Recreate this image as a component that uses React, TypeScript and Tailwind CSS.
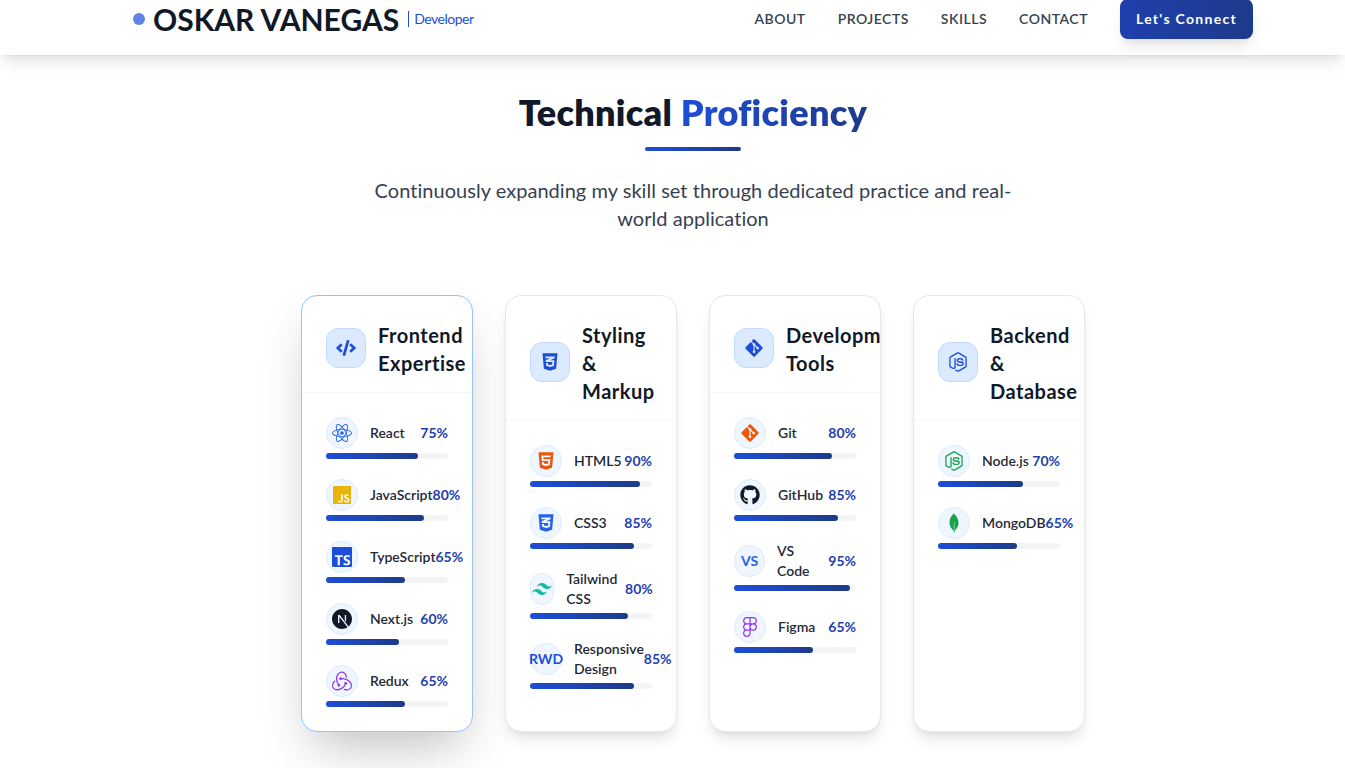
import type { ReactNode } from "react";
import { FaCode, FaCss3Alt, FaGitAlt, FaGithub, FaHtml5, FaNodeJs } from "react-icons/fa";
import {
  SiFigma,
  SiJavascript,
  SiMongodb,
  SiNextdotjs,
  SiReact,
  SiRedux,
  SiTailwindcss,
  SiTypescript,
} from "react-icons/si";

interface Skill {
  name: string;
  level: number;
  icon: ReactNode;
}

interface Group {
  title: string;
  icon: ReactNode;
  active?: boolean;
  skills: Skill[];
}

const groups: Group[] = [
  {
    title: "Frontend Expertise",
    icon: <FaCode className="text-xl text-[#1d4ed8]" />,
    active: true,
    skills: [
      { name: "React", level: 75, icon: <SiReact className="text-xl text-[#2563eb]" /> },
      { name: "JavaScript", level: 80, icon: <SiJavascript className="text-lg text-[#eab308]" /> },
      { name: "TypeScript", level: 65, icon: <SiTypescript className="text-xl text-[#1d4ed8]" /> },
      { name: "Next.js", level: 60, icon: <SiNextdotjs className="text-xl text-[#111827]" /> },
      { name: "Redux", level: 65, icon: <SiRedux className="text-xl text-[#9333ea]" /> },
    ],
  },
  {
    title: "Styling & Markup",
    icon: <FaCss3Alt className="text-xl text-[#1d4ed8]" />,
    skills: [
      { name: "HTML5", level: 90, icon: <FaHtml5 className="text-xl text-[#ea580c]" /> },
      { name: "CSS3", level: 85, icon: <FaCss3Alt className="text-xl text-[#2563eb]" /> },
      { name: "Tailwind CSS", level: 80, icon: <SiTailwindcss className="text-xl text-[#14b8a6]" /> },
      {
        name: "Responsive Design",
        level: 85,
        icon: <span className="text-sm font-bold text-[#1d4ed8]">RWD</span>,
      },
    ],
  },
  {
    title: "Development Tools",
    icon: <FaGitAlt className="text-xl text-[#1d4ed8]" />,
    skills: [
      { name: "Git", level: 80, icon: <FaGitAlt className="text-xl text-[#ea580c]" /> },
      { name: "GitHub", level: 85, icon: <FaGithub className="text-xl text-[#111827]" /> },
      {
        name: "VS Code",
        level: 95,
        icon: <span className="text-sm font-bold text-[#2563eb]">VS</span>,
      },
      { name: "Figma", level: 65, icon: <SiFigma className="text-xl text-[#9333ea]" /> },
    ],
  },
  {
    title: "Backend & Database",
    icon: <FaNodeJs className="text-xl text-[#1d4ed8]" />,
    skills: [
      { name: "Node.js", level: 70, icon: <FaNodeJs className="text-xl text-[#16a34a]" /> },
      { name: "MongoDB", level: 65, icon: <SiMongodb className="text-xl text-[#16a34a]" /> },
    ],
  },
];

const navLinks = ["About", "Projects", "Skills", "Contact"];

function SkillRow({ skill }: { skill: Skill }) {
  return (
    <div>
      <div className="mb-1 flex items-center justify-between">
        <div className="flex items-center gap-3">
          <div className="flex h-8 w-8 items-center justify-center rounded-full border border-[#dbeafe] bg-[#eff6ff]">
            {skill.icon}
          </div>
          <span className="text-sm font-semibold text-[#1f2937]">{skill.name}</span>
        </div>
        <span className="text-sm font-bold text-[#1e40af]">{skill.level}%</span>
      </div>
      <div className="h-1.5 w-full rounded-full bg-[#f3f4f6]">
        <div
          className="h-full rounded-full bg-gradient-to-r from-[#1d4ed8] to-[#1e3a8a]"
          style={{ width: `${skill.level}%` }}
        />
      </div>
    </div>
  );
}

function SkillCard({ group }: { group: Group }) {
  return (
    <div
      className={`overflow-hidden rounded-2xl border bg-white ${
        group.active ? "border-[#93c5fd] shadow-2xl" : "border-[#e5e7eb] shadow-lg"
      }`}
    >
      <div className="flex items-center gap-3 border-b border-[#f3f4f6] px-6 pb-4 pt-6">
        <div className="flex h-10 w-10 shrink-0 items-center justify-center rounded-xl border border-[#bfdbfe] bg-[#dbeafe]">
          {group.icon}
        </div>
        <h3 className="-mb-px pt-px text-xl font-bold tracking-[0.5px] text-[#111827]">{group.title}</h3>
      </div>
      <div className="space-y-5 p-6">
        {group.skills.map((skill) => (
          <SkillRow key={skill.name} skill={skill} />
        ))}
      </div>
    </div>
  );
}

export default function App() {
  return (
    <div className="h-screen overflow-hidden bg-white font-['Lato',sans-serif]">
      <header className="relative flex h-[55px] items-start justify-between bg-white pl-[133px] pr-[92px] shadow-lg">
        <div className="flex h-[38px] items-center">
          <span className="mr-2 h-3 w-3 rounded-full bg-[#1d4ed8]/70" />
          <span className="text-3xl font-bold text-[#111827]">OSKAR VANEGAS</span>
          <span className="ml-[9px] border-l border-[#1d4ed8] pl-[5px] text-sm leading-4 tracking-[-0.5px] text-[#1d4ed8]">
            Developer
          </span>
        </div>
        <div className="flex items-center gap-8">
          <nav className="-mt-px flex h-[38px] items-center gap-8">
            {navLinks.map((link) => (
              <a key={link} className="text-sm font-semibold uppercase tracking-[0.5px] text-[#374151]">
                {link}
              </a>
            ))}
          </nav>
          <button className="-mt-px h-10 w-[133px] rounded-lg bg-gradient-to-r from-[#1e40af] to-[#1e3a8a] text-sm font-bold tracking-[1.3px] text-white shadow-lg">
            Let's Connect
          </button>
        </div>
      </header>

      <main className="pl-[41px]">
        <div className="flex flex-col items-center pt-[37px]">
          <h2 className="text-4xl font-extrabold tracking-[0.3px] text-[#111827]">
            Technical{" "}
            <span className="bg-gradient-to-r from-[#1d4ed8] to-[#1e3a8a] bg-clip-text text-transparent">
              Proficiency
            </span>
          </h2>
          <div className="mt-[15px] h-1 w-24 rounded-full bg-gradient-to-r from-[#1d4ed8] to-[#1e3a8a]" />
          <p className="mt-[25px] max-w-2xl text-center text-xl tracking-[0.04px] text-[#374151]">
            Continuously expanding my skill set through dedicated practice and real-world application
          </p>
        </div>
        <div className="mt-[63px] flex justify-center">
          <div className="grid grid-cols-[repeat(4,172px)] gap-8">
            {groups.map((group) => (
              <SkillCard key={group.title} group={group} />
            ))}
          </div>
        </div>
      </main>
    </div>
  );
}
